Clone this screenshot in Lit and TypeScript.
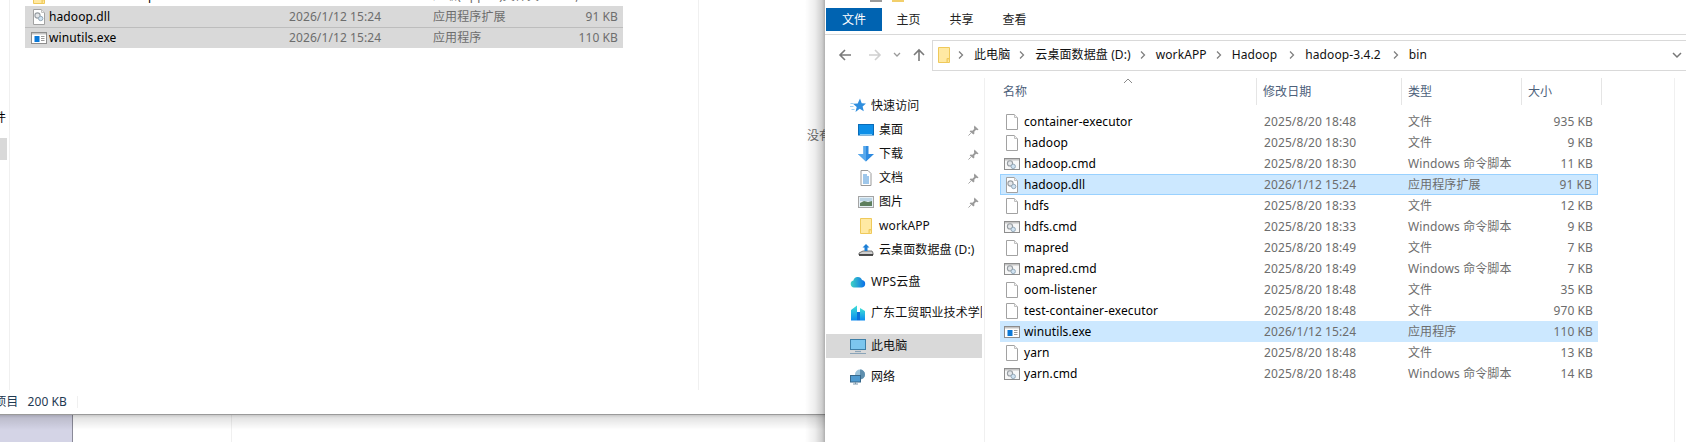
import { LitElement, html, css, svg } from "lit";
import { customElement } from "lit/decorators.js";

type Kind = "file" | "cmd" | "dll" | "exe";

const gears = (x: number, y: number) => svg`
  <circle cx="${x}" cy="${y}" r="2.6" fill="#e3e6e9" stroke="#979da2" stroke-width="1.1"/>
  <circle cx="${x + 3.2}" cy="${y + 3}" r="2.2" fill="#cfe2f2" stroke="#95a9b8" stroke-width="1"/>`;

const fileIcon = (kind: Kind) => {
  if (kind === "file")
    return html`<svg class="ficon" viewBox="0 0 16 16"><path d="M2.5 .5h8l3 3v12h-11z" fill="#fff" stroke="#a2a2a2"/><path d="M10.5 .5v3h3" fill="#f2f2f2" stroke="#c0c0c0"/></svg>`;
  if (kind === "dll")
    return html`<svg class="ficon" viewBox="0 0 16 16"><path d="M2.5 .5h8l3 3v12h-11z" fill="#fff" stroke="#a2a2a2"/><path d="M10.5 .5v3h3" fill="#eee" stroke="#c0c0c0"/>${gears(6.5, 6.5)}</svg>`;
  if (kind === "cmd")
    return html`<svg class="ficon" viewBox="0 0 16 16"><rect x=".5" y="2.5" width="15" height="11" fill="#f7f7f7" stroke="#8d8d8d"/><rect x="1" y="3" width="14" height="1.5" fill="#c4c4c4"/>${gears(6, 7.4)}</svg>`;
  return html`<svg class="ficon" viewBox="0 0 16 16"><rect x=".5" y="2.5" width="15" height="11" fill="#fff" stroke="#8d8d8d"/><rect x="1" y="3" width="14" height="1.5" fill="#c4c4c4"/><rect x="3.500" y="6" width="5" height="6" fill="#0a78d7"/><path d="M10 6.500h3.500M10 8.500h3.500M10 10.500h3.500" stroke="#9a9a9a"/></svg>`;
};

const folder = (cls = "ficon") =>
  html`<svg class="${cls}" viewBox="0 0 14 16"><path d="M1.5 .5h11v15h-11z" fill="#ffe9a3" stroke="#efc95a"/><path d="M10 15.500v-4h2.500" fill="#f7d97a" stroke="#efc95a"/></svg>`;

const NAV: Record<string, unknown> = {
  star: html`<svg class="nicon" viewBox="0 0 16 16"><path d="M10 .5l1.700 4.800 4.300.2-3.400 3 1.200 4.800L9.700 10.800 5.500 14l1.200-5L3 5.800l4.700-.3z" fill="#2f8ede"/><path d="M.5 5.500h3M0 8.500h3.500M1.500 11.500h3" stroke="#9fd0f2"/></svg>`,
  desk: html`<svg class="nicon" viewBox="0 0 16 16"><rect x=".5" y="2.5" width="15" height="10.500" fill="#0d8fe8" stroke="#0a6cb8"/><path d="M2 12.500L14 12.500" stroke="#7cc8f5"/></svg>`,
  down: html`<svg class="nicon" viewBox="0 0 16 16"><path d="M5.500 0h5v8H16l-8 7.500L0 8h5.500z" fill="#2d8ae0"/><path d="M5.500 0H8v15.500L0 8h5.500z" fill="#57a8ec"/></svg>`,
  doc: html`<svg class="nicon" viewBox="0 0 16 16"><path d="M3 .5h7l3 3v12H3z" fill="#fff" stroke="#9a9a9a"/><path d="M5 5h4M5 7h6M5 9h6M5 11h6M5 13h6" stroke="#3f8fd6"/></svg>`,
  pic: html`<svg class="nicon" viewBox="0 0 16 16"><rect x=".5" y="2.500" width="15" height="11" fill="#e6f0f6" stroke="#a4a4a4"/><path d="M2 9l4-2 4 1 4-1v5H2z" fill="#5e7f5e"/><rect x="2" y="4" width="12" height="3" fill="#bcd5e6"/></svg>`,
  drive: html`<svg class="nicon" viewBox="0 0 16 16"><path d="M1 11l4-2h9l1 2v2H1z" fill="#cfcfcf" stroke="#555" stroke-width=".8"/><path d="M1 13h14" stroke="#222" stroke-width="1.400"/><path d="M8 2l3.500 3.500H9.500V9h-3V5.500H4.500z" fill="#1c7fd6"/></svg>`,
  cloud: html`<svg class="nicon" viewBox="0 0 16 16"><defs><linearGradient id="cl" x1="0" x2="1"><stop offset="0" stop-color="#3fd3c4"/><stop offset="1" stop-color="#0a6fe8"/></linearGradient></defs><path d="M4 13.500a3.500 3.500 0 0 1-.6-6.900A4.500 4.500 0 0 1 12 6a3.800 3.800 0 0 1 0 7.500z" fill="url(#cl)"/></svg>`,
  school: html`<svg class="nicon" viewBox="0 0 16 16"><defs><linearGradient id="sc" x1="0" y1="0" x2="0" y2="1"><stop offset="0" stop-color="#3fe0d6"/><stop offset="1" stop-color="#0a8bf0"/></linearGradient></defs><path d="M1 5l6-4.500V15.500H1z" fill="url(#sc)"/><path d="M7 15.500V7h3v8.500z" fill="#0a6fd8"/><path d="M10 15.500V3l5 3v9.500z" fill="url(#sc)"/></svg>`,
  pc: html`<svg class="nicon" viewBox="0 0 16 16"><rect x=".5" y="1.500" width="15" height="10" fill="#7cc6ee" stroke="#3d7fa8"/><path d="M5 13.500h6" stroke="#8aa4b8" stroke-width="1.200"/><path d="M0 15.500h16" stroke="#8aa4b8"/></svg>`,
  net: html`<svg class="nicon" viewBox="0 0 16 16"><circle cx="10" cy="5.500" r="5" fill="#9cc4dc"/><path d="M10 .5a5 5 0 0 1 0 10z" fill="#5f8fae"/><rect x=".5" y="6.500" width="10" height="6.500" fill="#4e9ad0" stroke="#36678a"/><path d="M3 15h5M5.500 13v2" stroke="#7d97aa"/></svg>`,
};

const PIN = html`<svg class="pin" viewBox="0 0 12 12"><path d="M7 .5l4.500 4.500-1.200.6-1.500-.3-2 2 .2 2-1 1L1.800 7.100l1-1 2 .2 2-2-.3-1.500z" fill="#9a9a9a"/><path d="M3 9l-2.500 2.500" stroke="#9a9a9a"/></svg>`;

const FILES: [string, Kind, string, string, string, string?][] = [
  ["container-executor", "file", "2025/8/20 18:48", "文件", "935 KB"],
  ["hadoop", "file", "2025/8/20 18:30", "文件", "9 KB"],
  ["hadoop.cmd", "cmd", "2025/8/20 18:30", "Windows 命令脚本", "11 KB"],
  ["hadoop.dll", "dll", "2026/1/12 15:24", "应用程序扩展", "91 KB", "focus"],
  ["hdfs", "file", "2025/8/20 18:33", "文件", "12 KB"],
  ["hdfs.cmd", "cmd", "2025/8/20 18:33", "Windows 命令脚本", "9 KB"],
  ["mapred", "file", "2025/8/20 18:49", "文件", "7 KB"],
  ["mapred.cmd", "cmd", "2025/8/20 18:49", "Windows 命令脚本", "7 KB"],
  ["oom-listener", "file", "2025/8/20 18:48", "文件", "35 KB"],
  ["test-container-executor", "file", "2025/8/20 18:48", "文件", "970 KB"],
  ["winutils.exe", "exe", "2026/1/12 15:24", "应用程序", "110 KB", "sel"],
  ["yarn", "file", "2025/8/20 18:48", "文件", "13 KB"],
  ["yarn.cmd", "cmd", "2025/8/20 18:48", "Windows 命令脚本", "14 KB"],
];

@customElement("app-root")
export class AppRoot extends LitElement {
  static styles = css`
    :host {
      display: block;
      position: relative;
      width: 1686px;
      height: 442px;
      overflow: hidden;
      background: #fff;
      font-family: "Noto Sans", "Noto Sans CJK SC", sans-serif;
      font-size: 12px;
      line-height: 16px;
      letter-spacing: 0.1px;
      color: #000;
    }
    .desk {
      position: absolute;
      inset: 414px 0 0 0;
      display: flex;
    }
    .wall { width: 72px; background: #d4d4e6; border-right: 1px solid #8a8a98; }
    .deskgap { width: 158px; border-right: 1px solid #f0f0f0; }
    .deskshade {
      position: absolute;
      inset: 0;
      background: linear-gradient(#00000040, #0000001c 4px, #00000000 16px);
    }
    .win {
      position: absolute;
      background: #fff;
      display: flex;
      flex-direction: column;
    }
    .left { left: 0; top: 0; width: 825px; height: 414px; box-shadow: 0 1px 0 #9a9a9a; }
    .lmain { flex: 1; display: flex; min-height: 0; }
    .lnav {
      width: 9px;
      height: 390px;
      border-right: 1px solid #f0f0f0;
      overflow: hidden;
      display: flex;
      flex-direction: column;
      align-items: flex-end;
    }
    .lnavtext { margin-top: 110px; margin-right: 3px; white-space: nowrap; }
    .lnavsel { margin-top: 12px; width: 7px; height: 22px; background: #d9d9d9; align-self: flex-start; }
    .llist { height: 390px; border-right: 1px solid #f0f0f0; padding: 6px 0 0 15px; box-sizing: border-box; width: 689px; overflow: hidden; }
    .lrow {
      width: 598px;
      height: 21px;
      box-sizing: border-box;
      display: grid;
      grid-template-columns: 24px 240px 144px 1fr 70px;
      align-items: center;
      background: #d9d9d9;
    }
    .lrow.ghost { background: none; margin-top: -21px; }
    .lrow.second { border-top: 1px solid #bdbdbd; }
    .lrow .ic { display: flex; padding-left: 6px; }
    .lrow .sz { text-align: right; padding-right: 5px; color: #6d6d6d; white-space: nowrap; }
    .lrow .dt, .lrow .ty { color: #6d6d6d; white-space: nowrap; }
    .preview { flex: 1; color: #6d6d6d; padding: 128px 0 0 108px; white-space: nowrap; overflow: hidden; }
    .status { height: 24px; display: flex; align-items: center; color: #1f3a52; }
    .status .count { width: 78px; box-sizing: border-box; border-right: 1px solid #f0f0f0; display: flex; justify-content: flex-end; padding-right: 10px; gap: 9px; height: 12px; align-items: center; white-space: nowrap; overflow: hidden; }
    .shadow {
      position: absolute;
      left: 805px;
      top: 0;
      width: 20px;
      height: 442px;
      background: linear-gradient(90deg, #00000000, #00000012 50%, #00000030 85%, #00000050);
    }
    .right { left: 825px; top: 0; width: 861px; height: 442px; }
    .titlebit { height: 8px; display: flex; padding-left: 45px; gap: 10px; }
    .titlebit i { display: block; height: 2px; width: 12px; background: #9b9b9b; }
    .titlebit i + i { background: #f2cf6b; }
    .tabs { height: 26px; display: flex; border-bottom: 1px solid #d9d9d9; box-sizing: content-box; }
    .tab { height: 23px; display: flex; align-items: center; justify-content: center; width: 53px; color: #222; }
    .tab.file { width: 56px; margin-left: 1px; background: #0063b1; color: #fff; }
    .tools { height: 43px; display: flex; padding-top: 5px; box-sizing: border-box; }
    .navbtns { width: 107px; display: flex; align-items: center; height: 30px; flex: none; }
    .navbtns svg { display: block; flex: none; }
    .addr {
      flex: 1;
      height: 31px;
      box-sizing: border-box;
      border: 1px solid #d9d9d9;
      border-right: 0;
      display: flex;
      align-items: center;
      padding: 0 0 1px 4px;
      white-space: nowrap;
      color: #111;
    }
    .addr .crumb { margin-right: 9px; }
    .addr .crumb:nth-of-type(n + 4) { margin-right: 12px; }
    .addr .sep { margin-right: 10px; display: block; flex: none; }
    .addr .folderi { width: 14px; height: 16px; margin-right: 7px; flex: none; display: block; }
    .addr .drop { margin-left: auto; margin-right: 4px; display: block; flex: none; }
    .body { flex: 1; display: flex; min-height: 0; }
    .nav { width: 160px; box-sizing: border-box; border-right: 1px solid #f0f0f0; padding: 16px 2px 0 1px; flex: none; }
    .nrow { height: 24px; display: flex; align-items: center; white-space: nowrap; overflow: hidden; position: relative; padding-left: 24px; color: #111; }
    .nrow .nicon { width: 16px; height: 16px; margin-right: 5px; flex: none; display: block; }
    .nrow.sub { padding-left: 32px; }
    .nrow.g8 { margin-top: 8px; }
    .nrow.g7 { margin-top: 7px; }
    .nrow.g9 { margin-top: 9px; }
    .nrow.active { background: #d9d9d9; }
    .pin { width: 11px; height: 11px; margin-left: auto; margin-right: 3px; flex: none; display: block; }
    .list { display: flex; flex-direction: column; border-right: 1px solid #f0f0f0; width: 689px; flex: none; }
    .head {
      height: 27px;
      display: grid;
      grid-template-columns: 272px 145px 120px 80px;
      flex: none;
    }
    .hc { border-right: 1px solid #e5e5e5; padding-left: 6px; color: #4c607a; display: flex; align-items: center; position: relative; }
    .hc:first-child { padding-left: 18px; }
    .arrow { position: absolute; left: 138px; top: 0; display: block; }
    .rows { padding: 6px 0 0 15px; }
    .row {
      width: 598px;
      height: 21px;
      box-sizing: border-box;
      display: grid;
      grid-template-columns: 24px 233px 151px 1fr 63px;
      align-items: center;
    }
    .row .ic { display: flex; padding-left: 4px; }
    .ficon { width: 16px; height: 16px; display: block; flex: none; }
    .row .dt, .row .ty, .row .sz { color: #6d6d6d; white-space: nowrap; }
    .row .dt { padding-left: 7px; }
    .row .sz { text-align: right; padding-right: 5px; }
    .row .nm { white-space: nowrap; }
    .row.sel { background: #cce8ff; }
    .row.focus {
      background: #cce8ff;
      border: 1px solid #99d1ff;
      grid-template-columns: 23px 233px 151px 1fr 62px;
    }
    .row.focus .ic { padding-left: 3px; }
  `;

  render() {
    return html`
      <div class="desk">
        <div class="wall"></div>
        <div class="deskgap"></div>
        <div class="deskshade"></div>
      </div>

      <div class="win left">
        <div class="lmain">
          <div class="lnav">
            <div class="lnavtext">邮件</div>
            <div class="lnavsel"></div>
          </div>
          <div class="llist">
            <div class="lrow ghost">
              <div class="ic">${folder()}</div>
              <div>winutils-master.zip</div>
              <div class="dt">2026/1/12 15:20</div>
              <div class="ty">压缩(zipped)文件夹</div>
              <div class="sz">3,412 KB</div>
            </div>
            <div class="lrow">
              <div class="ic">${fileIcon("dll")}</div>
              <div>hadoop.dll</div>
              <div class="dt">2026/1/12 15:24</div>
              <div class="ty">应用程序扩展</div>
              <div class="sz">91 KB</div>
            </div>
            <div class="lrow second">
              <div class="ic">${fileIcon("exe")}</div>
              <div>winutils.exe</div>
              <div class="dt">2026/1/12 15:24</div>
              <div class="ty">应用程序</div>
              <div class="sz">110 KB</div>
            </div>
          </div>
          <div class="preview">没有预览。</div>
        </div>
        <div class="status">
          <div class="count"><span>项目</span><span>200 KB</span></div>
        </div>
      </div>

      <div class="shadow"></div>

      <div class="win right">
        <div class="titlebit"><i></i><i></i></div>
        <div class="tabs">
          <div class="tab file">文件</div>
          <div class="tab">主页</div>
          <div class="tab">共享</div>
          <div class="tab">查看</div>
        </div>
        <div class="tools">
          <div class="navbtns">
            <svg width="14" height="14" viewBox="0 0 14 14" style="margin-left:13px"><path d="M13 7H2M7 2L2 7l5 5" fill="none" stroke="#7a7a7a" stroke-width="1.6"/></svg>
            <svg width="14" height="14" viewBox="0 0 14 14" style="margin-left:16px"><path d="M1 7h11M7 2l5 5-5 5" fill="none" stroke="#d0d0d0" stroke-width="1.6"/></svg>
            <svg width="8" height="6" viewBox="0 0 8 6" style="margin-left:11px"><path d="M1 1l3 3 3-3" fill="none" stroke="#9a9a9a" stroke-width="1.3"/></svg>
            <svg width="14" height="14" viewBox="0 0 14 14" style="margin-left:11px"><path d="M7 13V2M2 7l5-5 5 5" fill="none" stroke="#7a7a7a" stroke-width="1.6"/></svg>
          </div>
          <div class="addr">
            ${folder("folderi")}
            ${["此电脑", "云桌面数据盘 (D:)", "workAPP", "Hadoop", "hadoop-3.4.2", "bin"].map(
              (c) => html`<svg class="sep" width="6" height="8" viewBox="0 0 6 8"><path d="M1 .5L4.500 4 1 7.500" fill="none" stroke="#808080" stroke-width="1.300"/></svg><span class="crumb">${c}</span>`
            )}
            <svg class="drop" width="10" height="7" viewBox="0 0 10 7"><path d="M1 1l4 4 4-4" fill="none" stroke="#777" stroke-width="1.500"/></svg>
          </div>
        </div>
        <div class="body">
          <div class="nav">
            <div class="nrow">${NAV.star}快速访问</div>
            <div class="nrow sub">${NAV.desk}桌面${PIN}</div>
            <div class="nrow sub">${NAV.down}下载${PIN}</div>
            <div class="nrow sub">${NAV.doc}文档${PIN}</div>
            <div class="nrow sub">${NAV.pic}图片${PIN}</div>
            <div class="nrow sub">${folder("nicon")}workAPP</div>
            <div class="nrow sub">${NAV.drive}云桌面数据盘 (D:)</div>
            <div class="nrow g8">${NAV.cloud}WPS云盘</div>
            <div class="nrow g7">${NAV.school}广东工贸职业技术学院</div>
            <div class="nrow g9 active">${NAV.pc}此电脑</div>
            <div class="nrow g7">${NAV.net}网络</div>
          </div>
          <div class="list">
            <div class="head">
              <div class="hc">名称<svg class="arrow" width="10" height="6" viewBox="0 0 10 6"><path d="M1 5l4-4 4 4" fill="none" stroke="#8a8a8a"/></svg></div>
              <div class="hc">修改日期</div>
              <div class="hc">类型</div>
              <div class="hc">大小</div>
            </div>
            <div class="rows">
              ${FILES.map(
                ([n, k, d, t, s, st]) => html`<div class="row ${st ?? ""}">
                  <div class="ic">${fileIcon(k)}</div>
                  <div class="nm">${n}</div>
                  <div class="dt">${d}</div>
                  <div class="ty">${t}</div>
                  <div class="sz">${s}</div>
                </div>`
              )}
            </div>
          </div>
        </div>
      </div>
    `;
  }
}
